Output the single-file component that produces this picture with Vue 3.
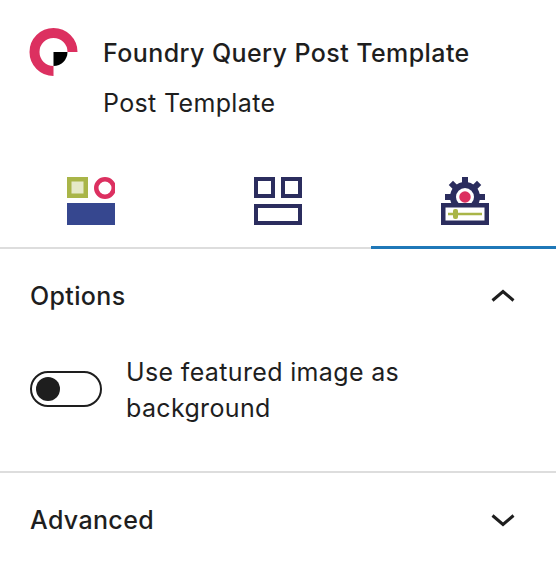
<template>
  <div class="panel">
    <div class="card">
      <svg class="logo" width="52" height="52" viewBox="0 0 52 52">
        <path d="M44.5 27A19 19 0 1 0 25.5 46" fill="none" stroke="#dc3060" stroke-width="10" />
        <path d="M25.5 27h14a14 14 0 0 1-14 14z" fill="#000" />
      </svg>
      <div class="card-text">
        <div class="title">Foundry Query Post Template</div>
        <div class="desc">Post Template</div>
      </div>
    </div>
    <div class="tabs">
      <div class="tab">
        <svg width="48" height="48" viewBox="0 0 48 48">
          <rect x="2.25" y="2.25" width="16.5" height="16.5" fill="#e6e9c8" stroke="#a9b548" stroke-width="4.5" />
          <circle cx="38" cy="11" r="8.75" fill="none" stroke="#dc3060" stroke-width="4.5" />
          <rect x="0" y="26" width="48" height="22" fill="#36478f" />
        </svg>
      </div>
      <div class="tab">
        <svg width="48" height="48" viewBox="0 0 48 48" fill="none" stroke="#2b2d5e" stroke-width="4">
          <rect x="2" y="2" width="17" height="17" />
          <rect x="29" y="2" width="17" height="17" />
          <rect x="2" y="29" width="44" height="17" />
        </svg>
      </div>
      <div class="tab">
        <svg width="48" height="48" viewBox="0 0 48 48">
          <g fill="#2b2d5e">
            <circle cx="24" cy="20" r="15" />
            <rect v-for="angle in toothAngles" :key="angle" x="21" y="0" width="6" height="10" :transform="`rotate(${angle} 24 20)`" />
          </g>
          <circle cx="24" cy="20" r="9" fill="#fff" />
          <circle cx="24" cy="20" r="5.75" fill="#dc3060" />
          <rect x="2.25" y="28.25" width="43.5" height="17.5" fill="#fff" stroke="#2b2d5e" stroke-width="4.5" />
          <rect x="7" y="35.75" width="34" height="2.5" fill="#a9b548" />
          <rect x="12" y="32" width="5" height="10" rx="2" fill="#a9b548" />
        </svg>
      </div>
      <span class="tab-marker"></span>
    </div>
    <section class="section">
      <div class="section-head">
        <span>Options</span>
        <svg width="36" height="36" viewBox="0 0 24 24"><path d="M5 15l7-6 7 6" fill="none" stroke="#1e1e1e" stroke-width="2" /></svg>
      </div>
      <div class="toggle-row">
        <span class="toggle"><span class="knob"></span></span>
        <span class="toggle-label">Use featured image as background</span>
      </div>
    </section>
    <section class="section last">
      <div class="section-head advanced">
        <span>Advanced</span>
        <svg width="36" height="36" viewBox="0 0 24 24"><path d="M5 9l7 6 7-6" fill="none" stroke="#1e1e1e" stroke-width="2" /></svg>
      </div>
    </section>
  </div>
</template>

<script setup>
const toothAngles = [0, 45, 90, 135, 180, 225, 270, 315]
</script>

<style>
html, body { margin: 0; background: #fff; }
</style>

<style scoped>
.panel {
  width: 556px;
  height: 588px;
  overflow: hidden;
  font-family: "Inter", "Liberation Sans", sans-serif;
  color: #1e1e1e;
  font-size: 25px;
  letter-spacing: 0.35px;
}
.card {
  display: flex;
  gap: 23px;
  padding: 28px 30px 0 28px;
  height: 126px;
  box-sizing: border-box;
}
.logo { flex: none; margin-top: -3px; margin-bottom: -1px; }
.title { font-weight: 500; line-height: 50px; letter-spacing: 0.42px; }
.desc { line-height: 50px; }
.tabs {
  display: grid;
  grid-template-columns: 185px 186px 185px;
  height: 123px;
  border-bottom: 2px solid #ddd;
  box-sizing: border-box;
  position: relative;
}
.tab { display: flex; justify-content: center; padding-top: 51px; }
.tab:first-child svg { margin-left: -3px; }
.tab:nth-child(3) svg { margin-left: 3px; }
.tab-marker {
  position: absolute;
  left: 371px;
  right: 0;
  bottom: -2px;
  height: 3px;
  background: #1f78b8;
}
.section { border-bottom: 2px solid #ddd; padding: 0 30px; }
.section.last { border-bottom: 0; }
.section-head {
  display: flex;
  justify-content: space-between;
  align-items: center;
  height: 95px;
  padding-bottom: 2px;
  box-sizing: border-box;
  font-weight: 500;
  margin-right: 5px;
}
.section-head.advanced { height: 93px; padding-bottom: 0; }
.toggle-row { display: flex; gap: 24px; padding: 10px 0 45px; }
.toggle {
  flex: none;
  width: 72px;
  height: 36px;
  margin-top: 17px;
  border: 2px solid #1e1e1e;
  border-radius: 18px;
  box-sizing: border-box;
  display: flex;
  align-items: center;
  padding-left: 4px;
}
.knob { width: 24px; height: 24px; border-radius: 50%; background: #1e1e1e; }
.toggle-label { line-height: 36px; }
</style>
